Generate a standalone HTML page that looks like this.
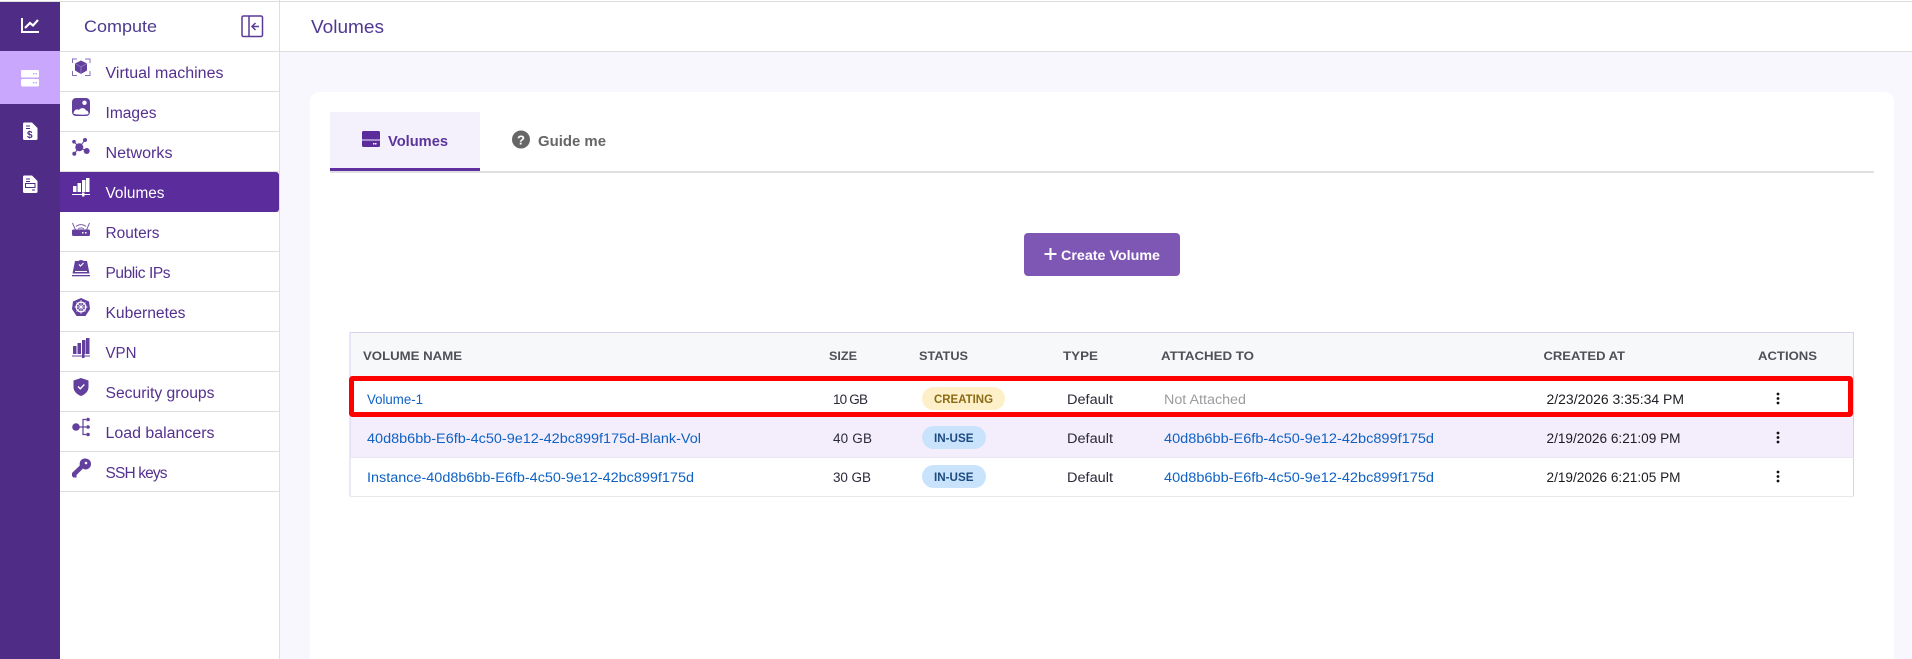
<!DOCTYPE html>
<html lang="en">
<head>
<meta charset="utf-8">
<title>Volumes</title>
<style>
html,body{margin:0;padding:0;width:1912px;height:659px;overflow:hidden;background:#fff}
svg{display:block}
text{font-family:"Liberation Sans",sans-serif;white-space:pre}
.s{font-size:15.5px;fill:#54308f}
.h{font-size:12px;font-weight:bold;fill:#4f4f57}
.v{font-size:13.5px;fill:#2a2a3a}
.l{font-size:13.5px;fill:#0f62c4}
.b{font-size:11.5px;font-weight:bold}
.i{fill:#63409d}
</style>
</head>
<body>
<svg width="1912" height="659" viewBox="0 0 1912 659" xmlns="http://www.w3.org/2000/svg">
<!-- backgrounds -->
<rect x="0" y="0" width="1912" height="659" fill="#fff"/>
<rect x="280" y="52" width="1632" height="607" fill="#f9f7fe"/>
<rect x="310" y="92" width="1584" height="580" rx="10" fill="#fff"/>
<rect x="0" y="1" width="1912" height="1" fill="#dedede"/>
<rect x="60" y="51" width="1852" height="1" fill="#dedede"/>
<rect x="279" y="0" width="1" height="659" fill="#dedede"/>

<!-- rail -->
<rect x="0" y="2" width="60" height="657" fill="#4f2d87"/>
<rect x="0" y="51" width="60" height="53" fill="#c9a7fd"/>
<path d="M22 18V32H39" fill="none" stroke="#fff" stroke-width="2"/>
<path d="M25 28L30 23L33 25.500L38 20" fill="none" stroke="#fff" stroke-width="2.200"/>
<rect x="21" y="70" width="18" height="7.500" rx="1.500" fill="#fff"/>
<rect x="21" y="79" width="18" height="7.500" rx="1.500" fill="#fff"/>
<g fill="#c9a7fd"><rect x="33" y="73" width="1.500" height="1.500"/><rect x="35.500" y="73" width="1.500" height="1.500"/><rect x="33" y="82" width="1.500" height="1.500"/><rect x="35.500" y="82" width="1.500" height="1.500"/></g>
<path d="M23 124a1.500 1.500 0 0 1 1.500-1.500H32L37.500 128V138.500a1.500 1.500 0 0 1-1.500 1.500H24.500A1.500 1.500 0 0 1 23 138.500Z" fill="#fff"/>
<path d="M26 126H30M26 128.500H30" stroke="#4f2d87" stroke-width="1"/>
<text x="27" y="138" font-size="10" font-weight="bold" fill="#4f2d87">$</text>
<path d="M23 177a1.500 1.500 0 0 1 1.500-1.500H32L37.500 181V191.500a1.500 1.500 0 0 1-1.500 1.500H24.500A1.500 1.500 0 0 1 23 191.500Z" fill="#fff"/>
<path d="M26 179H30M26 181.500H30M32 190H35" stroke="#4f2d87" stroke-width="1"/>
<rect x="25.500" y="183.500" width="9.500" height="4" fill="#fff" stroke="#4f2d87" stroke-width="1"/>

<!-- sidebar -->
<text x="84" y="32" font-size="17" fill="#4d3a8c" textLength="73" lengthAdjust="spacingAndGlyphs">Compute</text>
<g fill="none" stroke="#5b3a97" stroke-width="1.500">
<rect x="242" y="16" width="20.500" height="20.500" rx="1.500"/>
<path d="M249 16V36.500M259 26.500H252.500M255.500 23L252 26.500L255.500 30"/>
</g>
<g fill="#dedede">
<rect x="60" y="91" width="219" height="1"/>
<rect x="60" y="131" width="219" height="1"/>
<rect x="60" y="171" width="219" height="1"/>
<rect x="60" y="211" width="219" height="1"/>
<rect x="60" y="251" width="219" height="1"/>
<rect x="60" y="291" width="219" height="1"/>
<rect x="60" y="331" width="219" height="1"/>
<rect x="60" y="371" width="219" height="1"/>
<rect x="60" y="411" width="219" height="1"/>
<rect x="60" y="451" width="219" height="1"/>
<rect x="60" y="491" width="219" height="1"/>
</g>
<path d="M60 172H276a3 3 0 0 1 3 3V209a3 3 0 0 1-3 3H60Z" fill="#5b2c9b"/>

<text class="s" x="105.500" y="78" textLength="118" lengthAdjust="spacingAndGlyphs">Virtual machines</text>
<text class="s" x="105.500" y="118" textLength="51" lengthAdjust="spacingAndGlyphs">Images</text>
<text class="s" x="105.500" y="158" textLength="67" lengthAdjust="spacingAndGlyphs">Networks</text>
<text class="s" x="105.500" y="198" textLength="59" lengthAdjust="spacingAndGlyphs" style="fill:#fff">Volumes</text>
<text class="s" x="105.500" y="238" textLength="54" lengthAdjust="spacingAndGlyphs">Routers</text>
<text class="s" x="105.500" y="278" textLength="65" lengthAdjust="spacing">Public IPs</text>
<text class="s" x="105.500" y="318" textLength="80" lengthAdjust="spacingAndGlyphs">Kubernetes</text>
<text class="s" x="105.500" y="358" textLength="31" lengthAdjust="spacingAndGlyphs">VPN</text>
<text class="s" x="105.500" y="398" textLength="109" lengthAdjust="spacingAndGlyphs">Security groups</text>
<text class="s" x="105.500" y="438" textLength="109" lengthAdjust="spacingAndGlyphs">Load balancers</text>
<text class="s" x="105.500" y="478" textLength="62" lengthAdjust="spacing">SSH keys</text>

<!-- sidebar icons -->
<path d="M77 59H72.500V63M85 59H90V63M72.500 71V75.500H77M85 75.500H90V71" fill="none" stroke="#8a6db8" stroke-width="1"/>
<path d="M81 60.500L87 63.500V70.500L81 74L75 70.500V63.500Z" class="i"/>
<path d="M75 63.500L81 67L87 63.500M81 67V74" fill="none" stroke="#a48cc9" stroke-width=".7"/>
<rect x="72" y="98" width="18" height="18" rx="4" class="i"/>
<path d="M73.500 113.500C74 109.500 77 108.500 79 110C80.500 107.500 85 107.500 86 110.500C88 110.500 88.500 112 88.500 114C87 115 75 115 73.500 113.500Z" fill="#fff"/>
<circle cx="84.500" cy="102.800" r="2.200" fill="#fff"/>
<path d="M74 141.700L79.300 147.300L85 140M79.300 147.300L86.700 151M79.300 147.300L74.300 153.700" fill="none" stroke="#63409d" stroke-width="1"/>
<g class="i">
<circle cx="79.300" cy="147.300" r="4"/><circle cx="74" cy="141.700" r="1.800"/><circle cx="85" cy="140" r="2"/><circle cx="86.700" cy="151" r="3"/><circle cx="74.300" cy="153.700" r="2"/>
</g>
<g fill="#fff">
<rect x="73" y="186" width="3.500" height="6"/><rect x="77.500" y="183" width="3.500" height="9"/><rect x="82" y="180" width="3.500" height="12"/><rect x="86" y="178" width="3.500" height="14"/>
<rect x="72" y="194" width="18" height="1"/><rect x="82" y="192.500" width="2.500" height="4"/>
</g>
<path d="M76 226.500A7.500 7.500 0 0 1 86 226.500M78 229A4.500 4.500 0 0 1 84 229M72.500 223L75.500 230M89.500 223L86.500 230" fill="none" stroke="#7c60ac" stroke-width="1"/>
<rect x="72" y="229.500" width="18" height="6.500" rx="1.500" class="i"/>
<path d="M81 229L83.800 231.500H78.200Z" class="i"/>
<g fill="#fff"><rect x="82" y="232" width="1.500" height="1.500"/><rect x="85" y="232" width="1.500" height="1.500"/></g>
<path d="M75 261H87L89.500 273.500H72.500Z" class="i"/>
<circle cx="81" cy="264.500" r="4.500" class="i"/>
<path d="M79 264.500L80.500 266L83.500 263" stroke="#fff" stroke-width="1.200" fill="none"/>
<path d="M75 271.500H87" stroke="#fff" stroke-width="1"/>
<rect x="72" y="275" width="18" height="1.300" class="i"/>
<path d="M81 298L89 301.500L90 309L85.500 316H76.500L72 309L73 301.500Z" class="i"/>
<circle cx="81" cy="307" r="4.800" fill="none" stroke="#fff" stroke-width="1.300"/>
<path d="M81 300V314M74.500 307H87.500M76.500 302.500L85.500 311.500M85.500 302.500L76.500 311.500" stroke="#fff" stroke-width=".7"/>
<g class="i">
<rect x="73" y="346" width="3.500" height="8"/><rect x="77.500" y="343" width="3.500" height="11"/><rect x="82" y="340" width="3.500" height="14"/><rect x="86" y="338" width="3.500" height="16"/>
<rect x="72" y="355.500" width="18" height="1"/><rect x="82" y="354" width="2.500" height="4"/>
</g>
<path d="M81 378L88.500 380.500V387C88.500 391.500 85 394.500 81 396C77 394.500 73.500 391.500 73.500 387V380.500Z" class="i"/>
<path d="M78 386.500L80.300 388.700L84.300 384.500" stroke="#fff" stroke-width="1.400" fill="none"/>
<circle cx="76" cy="427" r="3.800" class="i"/>
<circle cx="88" cy="419.500" r="1.800" class="i"/><circle cx="88" cy="427" r="1.800" class="i"/><circle cx="88" cy="434.500" r="1.800" class="i"/>
<path d="M86 419.500H83V434.500H86M79 427H86" fill="none" stroke="#63409d" stroke-width="1.200"/>
<path d="M85 458.500a5.500 5.500 0 0 1 1 11c-1.500 0-2.500-.5-3-1L76.500 475V477.500H73.500L72 476V473L79.800 465.500C79 461.500 81.500 458.500 85 458.500Z" class="i"/>
<circle cx="86" cy="463" r="1.300" fill="#fff"/>

<!-- header -->
<text x="311" y="33" font-size="18" fill="#4f3893" textLength="73" lengthAdjust="spacingAndGlyphs">Volumes</text>

<!-- tabs -->
<rect x="330" y="112" width="150" height="56" fill="#f5f1fc"/>
<rect x="330" y="168" width="150" height="3" fill="#5d2f9f"/>
<rect x="480" y="171" width="1394" height="2" fill="#e0e0e2"/>
<rect x="330" y="171" width="150" height="2" fill="#e0e0e2"/>
<rect x="362" y="131" width="18" height="16" rx="1.500" fill="#5b2c9b"/>
<rect x="362" y="139.500" width="18" height="1" fill="#f5f1fc"/>
<rect x="375" y="143" width="1.500" height="1.500" fill="#fff"/><rect x="373" y="143" width="1.500" height="1.500" fill="#fff"/>
<text x="388" y="146" font-size="15" font-weight="bold" fill="#5b349b" textLength="60" lengthAdjust="spacingAndGlyphs">Volumes</text>
<circle cx="521" cy="139.500" r="9" fill="#666"/>
<text x="517" y="144.500" font-size="13" font-weight="bold" fill="#fff">?</text>
<text x="538" y="146" font-size="15" font-weight="bold" fill="#666" textLength="68" lengthAdjust="spacingAndGlyphs">Guide me</text>

<!-- button -->
<rect x="1024" y="233" width="156" height="43" rx="4" fill="#7e57b5"/>
<path d="M1050.500 248V260M1044.500 254H1056.500" stroke="#fff" stroke-width="2"/>
<text x="1061" y="260" font-size="14" font-weight="bold" fill="#fff" textLength="99" lengthAdjust="spacingAndGlyphs">Create Volume</text>

<!-- table -->
<rect x="350" y="332.500" width="1503" height="44" fill="#f7f8fa"/>
<rect x="350" y="417" width="1503" height="40" fill="#f4edfc"/>
<path d="M350 496V332.500H1853.500V496" fill="none" stroke="#d6d1ee" stroke-width="1"/>
<rect x="350" y="496" width="1504" height="1" fill="#e8e8ec"/>
<rect x="350" y="457" width="1504" height="1" fill="#e9e6f2"/>

<text class="h" x="363" y="360" textLength="99" lengthAdjust="spacingAndGlyphs">VOLUME NAME</text>
<text class="h" x="829" y="360" textLength="28" lengthAdjust="spacingAndGlyphs">SIZE</text>
<text class="h" x="919" y="360" textLength="49" lengthAdjust="spacingAndGlyphs">STATUS</text>
<text class="h" x="1063" y="360" textLength="35" lengthAdjust="spacingAndGlyphs">TYPE</text>
<text class="h" x="1161" y="360" textLength="93" lengthAdjust="spacingAndGlyphs">ATTACHED TO</text>
<text class="h" x="1543.500" y="360" textLength="81.500" lengthAdjust="spacingAndGlyphs">CREATED AT</text>
<text class="h" x="1758" y="360" textLength="59" lengthAdjust="spacingAndGlyphs">ACTIONS</text>

<text class="l" x="367" y="404" textLength="56" lengthAdjust="spacingAndGlyphs">Volume-1</text>
<text class="v" x="833" y="404" textLength="35" lengthAdjust="spacing">10 GB</text>
<rect x="922" y="387" width="83" height="23" rx="11.500" fill="#fdf0c9"/>
<text class="b" x="934" y="403" fill="#8a6a14" textLength="59" lengthAdjust="spacingAndGlyphs">CREATING</text>
<text class="v" x="1067" y="404" textLength="46" lengthAdjust="spacingAndGlyphs">Default</text>
<text x="1164" y="404" font-size="13.500" fill="#9c9ca0" textLength="82" lengthAdjust="spacingAndGlyphs">Not Attached</text>
<text class="v" x="1546.500" y="404" textLength="137.500" lengthAdjust="spacingAndGlyphs" style="fill:#1c1c22">2/23/2026 3:35:34 PM</text>

<text class="l" x="367" y="443" textLength="334" lengthAdjust="spacingAndGlyphs">40d8b6bb-E6fb-4c50-9e12-42bc899f175d-Blank-Vol</text>
<text class="v" x="833" y="443" textLength="39" lengthAdjust="spacing">40 GB</text>
<rect x="922" y="426" width="64" height="23" rx="11.500" fill="#c9e3fc"/>
<text class="b" x="934" y="442" fill="#1c4a80" textLength="39.500" lengthAdjust="spacingAndGlyphs">IN-USE</text>
<text class="v" x="1067" y="443" textLength="46" lengthAdjust="spacingAndGlyphs">Default</text>
<text class="l" x="1164" y="443" textLength="270" lengthAdjust="spacingAndGlyphs">40d8b6bb-E6fb-4c50-9e12-42bc899f175d</text>
<text class="v" x="1546.500" y="443" textLength="134" lengthAdjust="spacingAndGlyphs" style="fill:#1c1c22">2/19/2026 6:21:09 PM</text>

<text class="l" x="367" y="482" textLength="327" lengthAdjust="spacingAndGlyphs">Instance-40d8b6bb-E6fb-4c50-9e12-42bc899f175d</text>
<text class="v" x="833" y="482" textLength="38" lengthAdjust="spacing">30 GB</text>
<rect x="922" y="465" width="64" height="23" rx="11.500" fill="#c9e3fc"/>
<text class="b" x="934" y="481" fill="#1c4a80" textLength="39.500" lengthAdjust="spacingAndGlyphs">IN-USE</text>
<text class="v" x="1067" y="482" textLength="46" lengthAdjust="spacingAndGlyphs">Default</text>
<text class="l" x="1164" y="482" textLength="270" lengthAdjust="spacingAndGlyphs">40d8b6bb-E6fb-4c50-9e12-42bc899f175d</text>
<text class="v" x="1546.500" y="482" textLength="134" lengthAdjust="spacingAndGlyphs" style="fill:#1c1c22">2/19/2026 6:21:05 PM</text>

<g fill="#111">
<circle cx="1778" cy="394" r="1.400"/><circle cx="1778" cy="398.500" r="1.400"/><circle cx="1778" cy="403" r="1.400"/>
<circle cx="1778" cy="433" r="1.400"/><circle cx="1778" cy="437.500" r="1.400"/><circle cx="1778" cy="442" r="1.400"/>
<circle cx="1778" cy="472" r="1.400"/><circle cx="1778" cy="476.500" r="1.400"/><circle cx="1778" cy="481" r="1.400"/>
</g>

<!-- red highlight -->
<rect x="351.500" y="378.500" width="1499" height="36" rx="1" fill="none" stroke="#fe0000" stroke-width="5"/>
</svg>
</body>
</html>
